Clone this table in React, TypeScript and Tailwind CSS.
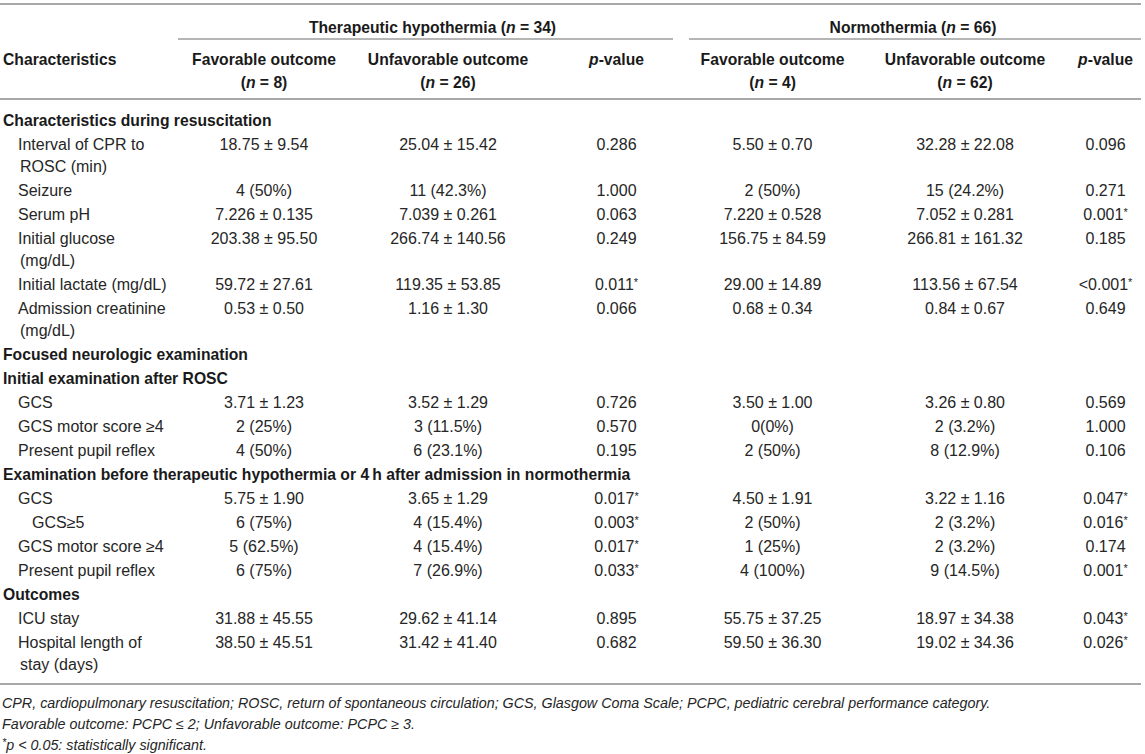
import React from "react";

type Row =
  | { kind: "h"; text: string }
  | { kind: "r"; label: string[]; indent?: number; v: string[] };

const rows: Row[] = [
  { kind: "h", text: "Characteristics during resuscitation" },
  { kind: "r", label: ["Interval of CPR to", "ROSC (min)"], v: ["18.75 ± 9.54", "25.04 ± 15.42", "0.286", "5.50 ± 0.70", "32.28 ± 22.08", "0.096"] },
  { kind: "r", label: ["Seizure"], v: ["4 (50%)", "11 (42.3%)", "1.000", "2 (50%)", "15 (24.2%)", "0.271"] },
  { kind: "r", label: ["Serum pH"], v: ["7.226 ± 0.135", "7.039 ± 0.261", "0.063", "7.220 ± 0.528", "7.052 ± 0.281", "0.001*"] },
  { kind: "r", label: ["Initial glucose", "(mg/dL)"], v: ["203.38 ± 95.50", "266.74 ± 140.56", "0.249", "156.75 ± 84.59", "266.81 ± 161.32", "0.185"] },
  { kind: "r", label: ["Initial lactate (mg/dL)"], v: ["59.72 ± 27.61", "119.35 ± 53.85", "0.011*", "29.00 ± 14.89", "113.56 ± 67.54", "<0.001*"] },
  { kind: "r", label: ["Admission creatinine", "(mg/dL)"], v: ["0.53 ± 0.50", "1.16 ± 1.30", "0.066", "0.68 ± 0.34", "0.84 ± 0.67", "0.649"] },
  { kind: "h", text: "Focused neurologic examination" },
  { kind: "h", text: "Initial examination after ROSC" },
  { kind: "r", label: ["GCS"], v: ["3.71 ± 1.23", "3.52 ± 1.29", "0.726", "3.50 ± 1.00", "3.26 ± 0.80", "0.569"] },
  { kind: "r", label: ["GCS motor score ≥4"], v: ["2 (25%)", "3 (11.5%)", "0.570", "0(0%)", "2 (3.2%)", "1.000"] },
  { kind: "r", label: ["Present pupil reflex"], v: ["4 (50%)", "6 (23.1%)", "0.195", "2 (50%)", "8 (12.9%)", "0.106"] },
  { kind: "h", text: "Examination before therapeutic hypothermia or 4\u2009h after admission in normothermia" },
  { kind: "r", label: ["GCS"], v: ["5.75 ± 1.90", "3.65 ± 1.29", "0.017*", "4.50 ± 1.91", "3.22 ± 1.16", "0.047*"] },
  { kind: "r", label: ["GCS≥5"], indent: 2, v: ["6 (75%)", "4 (15.4%)", "0.003*", "2 (50%)", "2 (3.2%)", "0.016*"] },
  { kind: "r", label: ["GCS motor score ≥4"], v: ["5 (62.5%)", "4 (15.4%)", "0.017*", "1 (25%)", "2 (3.2%)", "0.174"] },
  { kind: "r", label: ["Present pupil reflex"], v: ["6 (75%)", "7 (26.9%)", "0.033*", "4 (100%)", "9 (14.5%)", "0.001*"] },
  { kind: "h", text: "Outcomes" },
  { kind: "r", label: ["ICU stay"], v: ["31.88 ± 45.55", "29.62 ± 41.14", "0.895", "55.75 ± 37.25", "18.97 ± 34.38", "0.043*"] },
  { kind: "r", label: ["Hospital length of", "stay (days)"], v: ["38.50 ± 45.51", "31.42 ± 41.40", "0.682", "59.50 ± 36.30", "19.02 ± 34.36", "0.026*"] },
];

function Star() {
  return <span className="relative top-[-4px] text-[11px] leading-none">*</span>;
}

function Val({ s }: { s: string }) {
  if (s.endsWith("*")) {
    return (
      <>
        {s.slice(0, -1)}
        <Star />
      </>
    );
  }
  return <>{s}</>;
}

const N = () => <i>n</i>;

export default function App() {
  const font = { fontFamily: '"Liberation Sans", Arial, sans-serif' };
  return (
    <div className="bg-white w-[1145px] h-[754px] overflow-hidden pt-[3px] text-[#262626]" style={font}>
      <table className="w-[1141px] table-fixed border-collapse text-[16px]">
        <colgroup>
          <col className="w-[180px]" />
          <col className="w-[168px]" />
          <col className="w-[200px]" />
          <col className="w-[137px]" />
          <col className="w-[175px]" />
          <col className="w-[210px]" />
          <col className="w-[71px]" />
        </colgroup>
        <thead className="text-[15.7px] text-[#1a1a1a]">
          <tr className="border-t-2 border-[#a8a8a8]">
            <th className="p-0"></th>
            <th colSpan={3} className="p-0 font-bold">
              <div className="pt-[12px] pb-0 leading-[21px] text-center">
                Therapeutic hypothermia (<N /> = 34)
              </div>
              <div className="h-[2px] bg-[#b5b5b5] ml-[-2px] mr-[12px]" />
            </th>
            <th colSpan={3} className="p-0 font-bold">
              <div className="pt-[12px] pb-0 leading-[21px] text-center">
                Normothermia (<N /> = 66)
              </div>
              <div className="h-[2px] bg-[#b5b5b5] ml-[4px] mr-0" />
            </th>
          </tr>
          <tr className="border-b-2 border-[#a8a8a8] align-top leading-[23px]">
            <th className="text-left font-bold pl-[3px] pt-[8px] pb-[4px]">Characteristics</th>
            <th className="text-center font-bold pt-[8px] pb-[4px]">
              Favorable outcome
              <br />(<N /> = 8)
            </th>
            <th className="text-center font-bold pt-[8px] pb-[4px]">
              Unfavorable outcome
              <br />(<N /> = 26)
            </th>
            <th className="text-center font-bold pt-[8px] pb-[4px]">
              <i>p</i>-value
            </th>
            <th className="text-center font-bold pt-[8px] pb-[4px]">
              Favorable outcome
              <br />(<N /> = 4)
            </th>
            <th className="text-center font-bold pt-[8px] pb-[4px]">
              Unfavorable outcome
              <br />(<N /> = 62)
            </th>
            <th className="text-center font-bold pt-[8px] pb-[4px]">
              <i>p</i>-value
            </th>
          </tr>
        </thead>
        <tbody className="border-b-2 border-[#a8a8a8] leading-[22px]">
          <tr>
            <td colSpan={7} className="h-[10px] p-0"></td>
          </tr>
          {rows.map((r, i) =>
            r.kind === "h" ? (
              <tr key={i}>
                <td colSpan={7} className="font-bold text-[15.7px] pl-[3px] py-[1px] whitespace-nowrap text-[#1a1a1a]">
                  {r.text}
                </td>
              </tr>
            ) : (
              <tr key={i} className="align-top">
                <td className={`py-[1px] whitespace-nowrap ${r.indent ? "pl-[32px]" : "pl-[18px]"}`}>
                  {r.label.map((l, j) => (
                    <div key={j} className={j > 0 ? "pl-[2px]" : ""}>
                      {l}
                    </div>
                  ))}
                </td>
                {r.v.map((v, j) => (
                  <td key={j} className="py-[1px] text-center whitespace-nowrap">
                    <Val s={v} />
                  </td>
                ))}
              </tr>
            )
          )}
          <tr>
            <td colSpan={7} className="h-[7px] p-0"></td>
          </tr>
        </tbody>
      </table>
      <div className="pt-[8px] pl-[2px] italic text-[14.3px] leading-[21px] text-[#262626]">
        <div>
          CPR, cardiopulmonary resuscitation; ROSC, return of spontaneous circulation; GCS, Glasgow Coma Scale; PCPC, pediatric cerebral performance category.
        </div>
        <div>Favorable outcome: PCPC ≤ 2; Unfavorable outcome: PCPC ≥ 3.</div>
        <div>
          <Star />p &lt; 0.05: statistically significant.
        </div>
      </div>
    </div>
  );
}
